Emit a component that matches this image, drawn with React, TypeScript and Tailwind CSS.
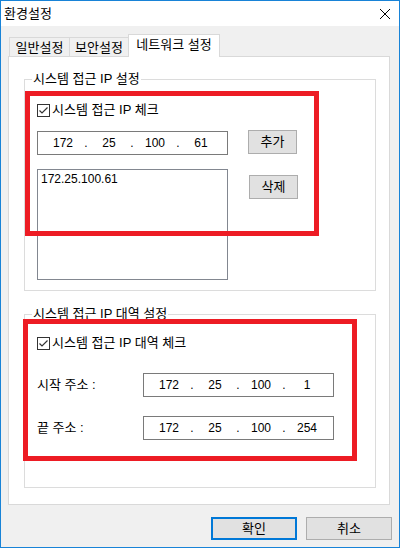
import React from 'react'

const font = "font-['Liberation_Sans','Noto_Sans_CJK_KR',sans-serif]"

function CheckBox({ label }: { label: string }) {
  return (
    <div className="flex items-center h-[16px]">
      <div className="w-[13px] h-[13px] border border-[#333333] bg-white flex items-center justify-center">
        <svg width="11" height="11" viewBox="0 0 11 11">
          <path d="M1.5 5.5 L4 8 L9.5 2.5" fill="none" stroke="#333333" strokeWidth="1.2" />
        </svg>
      </div>
      <span className="ml-[2px] text-[13px] leading-[16px] text-black">{label}</span>
    </div>
  )
}

function IpBox({ parts, className = '' }: { parts: string[]; className?: string }) {
  return (
    <div className={`w-[191px] h-[24px] border border-[#7a7a7a] bg-white flex items-center pl-[8px] text-[12px] text-black ${className}`}>
      {parts.map((p, i) => (
        <React.Fragment key={i}>
          {i > 0 && <span className="w-[12px] text-center">.</span>}
          <span className="w-[34px] text-center">{p}</span>
        </React.Fragment>
      ))}
    </div>
  )
}

function SmallButton({ label, className = '' }: { label: string; className?: string }) {
  return (
    <div className={`w-[49px] h-[24px] border border-[#adadad] bg-[#e1e1e1] flex items-center justify-center text-[13px] text-black ${className}`}>
      {label}
    </div>
  )
}

export default function App() {
  return (
    <div className={`relative w-[400px] h-[548px] border border-[#1883d7] bg-[#f0f0f0] flex flex-col ${font}`}>
      {/* title bar */}
      <div className="h-[25px] bg-white flex items-center justify-between pl-[3px] pr-[9px]">
        <span className="text-[13px] text-black">환경설정</span>
        <svg width="10" height="10" viewBox="0 0 10 10" className="mt-[1px]">
          <path d="M0 0 L10 10 M10 0 L0 10" stroke="#000" strokeWidth="1" />
        </svg>
      </div>

      {/* tabs */}
      <div className="pt-[8px] pl-[8px] flex items-start h-[31px]">
        <div className="w-[61px] h-[20px] mt-[3px] border border-b-0 border-[#d9d9d9] bg-[#f0f0f0] flex items-center justify-center text-[13px] text-black">
          일반설정
        </div>
        <div className="-ml-[1px] w-[60px] h-[20px] mt-[3px] border border-b-0 border-[#d9d9d9] bg-[#f0f0f0] flex items-center justify-center text-[13px] text-black">
          보안설정
        </div>
        <div className="relative z-10 -ml-[1px] w-[92px] h-[23px] border border-b-0 border-[#d9d9d9] bg-white flex items-center justify-center pb-[3px] text-[13px] text-black">
          네트워크 설정
        </div>
      </div>

      {/* tab panel */}
      <div className="ml-[7px] -mt-[1px] w-[382px] h-[449px] border border-[#d9d9d9] bg-white px-[15px] pt-[14px]">
        <fieldset className="w-[352px] border border-[#dcdcdc]">
          <legend className="ml-[7px] px-[1px] text-[13px] leading-[16px] text-black">시스템 접근 IP 설정</legend>
          <div className="pl-[12px] pt-[15px] pb-[10px]">
            <CheckBox label="시스템 접근 IP 체크" />
            <div className="flex items-start mt-[12px]">
              <IpBox parts={['172', '25', '100', '61']} className="mt-[1px]" />
              <SmallButton label="추가" className="ml-[20px]" />
            </div>
            <div className="flex items-start mt-[14px]">
              <div className="w-[191px] h-[111px] border border-[#828790] bg-white pl-[3px] pt-[1px] text-[12px] leading-[16px] text-black">
                172.25.100.61
              </div>
              <SmallButton label="삭제" className="ml-[21px] mt-[6px]" />
            </div>
          </div>
        </fieldset>

        <fieldset className="w-[352px] mt-[15px] border border-[#dcdcdc]">
          <legend className="ml-[7px] px-[1px] text-[13px] leading-[16px] text-black">시스템 접근 IP 대역 설정</legend>
          <div className="pl-[12px] pt-[13px] pb-[47px]">
            <CheckBox label="시스템 접근 IP 대역 체크" />
            <div className="flex items-center mt-[22px]">
              <span className="w-[106px] text-[13px] text-black">시작 주소 :</span>
              <IpBox parts={['172', '25', '100', '1']} />
            </div>
            <div className="flex items-center mt-[19px]">
              <span className="w-[106px] text-[13px] text-black">끝 주소 :</span>
              <IpBox parts={['172', '25', '100', '254']} />
            </div>
          </div>
        </fieldset>
      </div>

      {/* dialog buttons */}
      <div className="mt-[12px] flex justify-end gap-[9px] pr-[7px]">
        <div className="w-[86px] h-[23px] border-2 border-[#0078d7] bg-[#e1e1e1] flex items-center justify-center text-[13px] text-black">
          확인
        </div>
        <div className="w-[86px] h-[23px] border border-[#adadad] bg-[#e1e1e1] flex items-center justify-center text-[13px] text-black">
          취소
        </div>
      </div>

      {/* red annotation boxes */}
      <div className="absolute left-[24px] top-[90px] w-[294px] h-[145px] border-[5px] border-[#ed1c24]" />
      <div className="absolute left-[22px] top-[318px] w-[334px] h-[142px] border-[5px] border-[#ed1c24]" />
    </div>
  )
}
